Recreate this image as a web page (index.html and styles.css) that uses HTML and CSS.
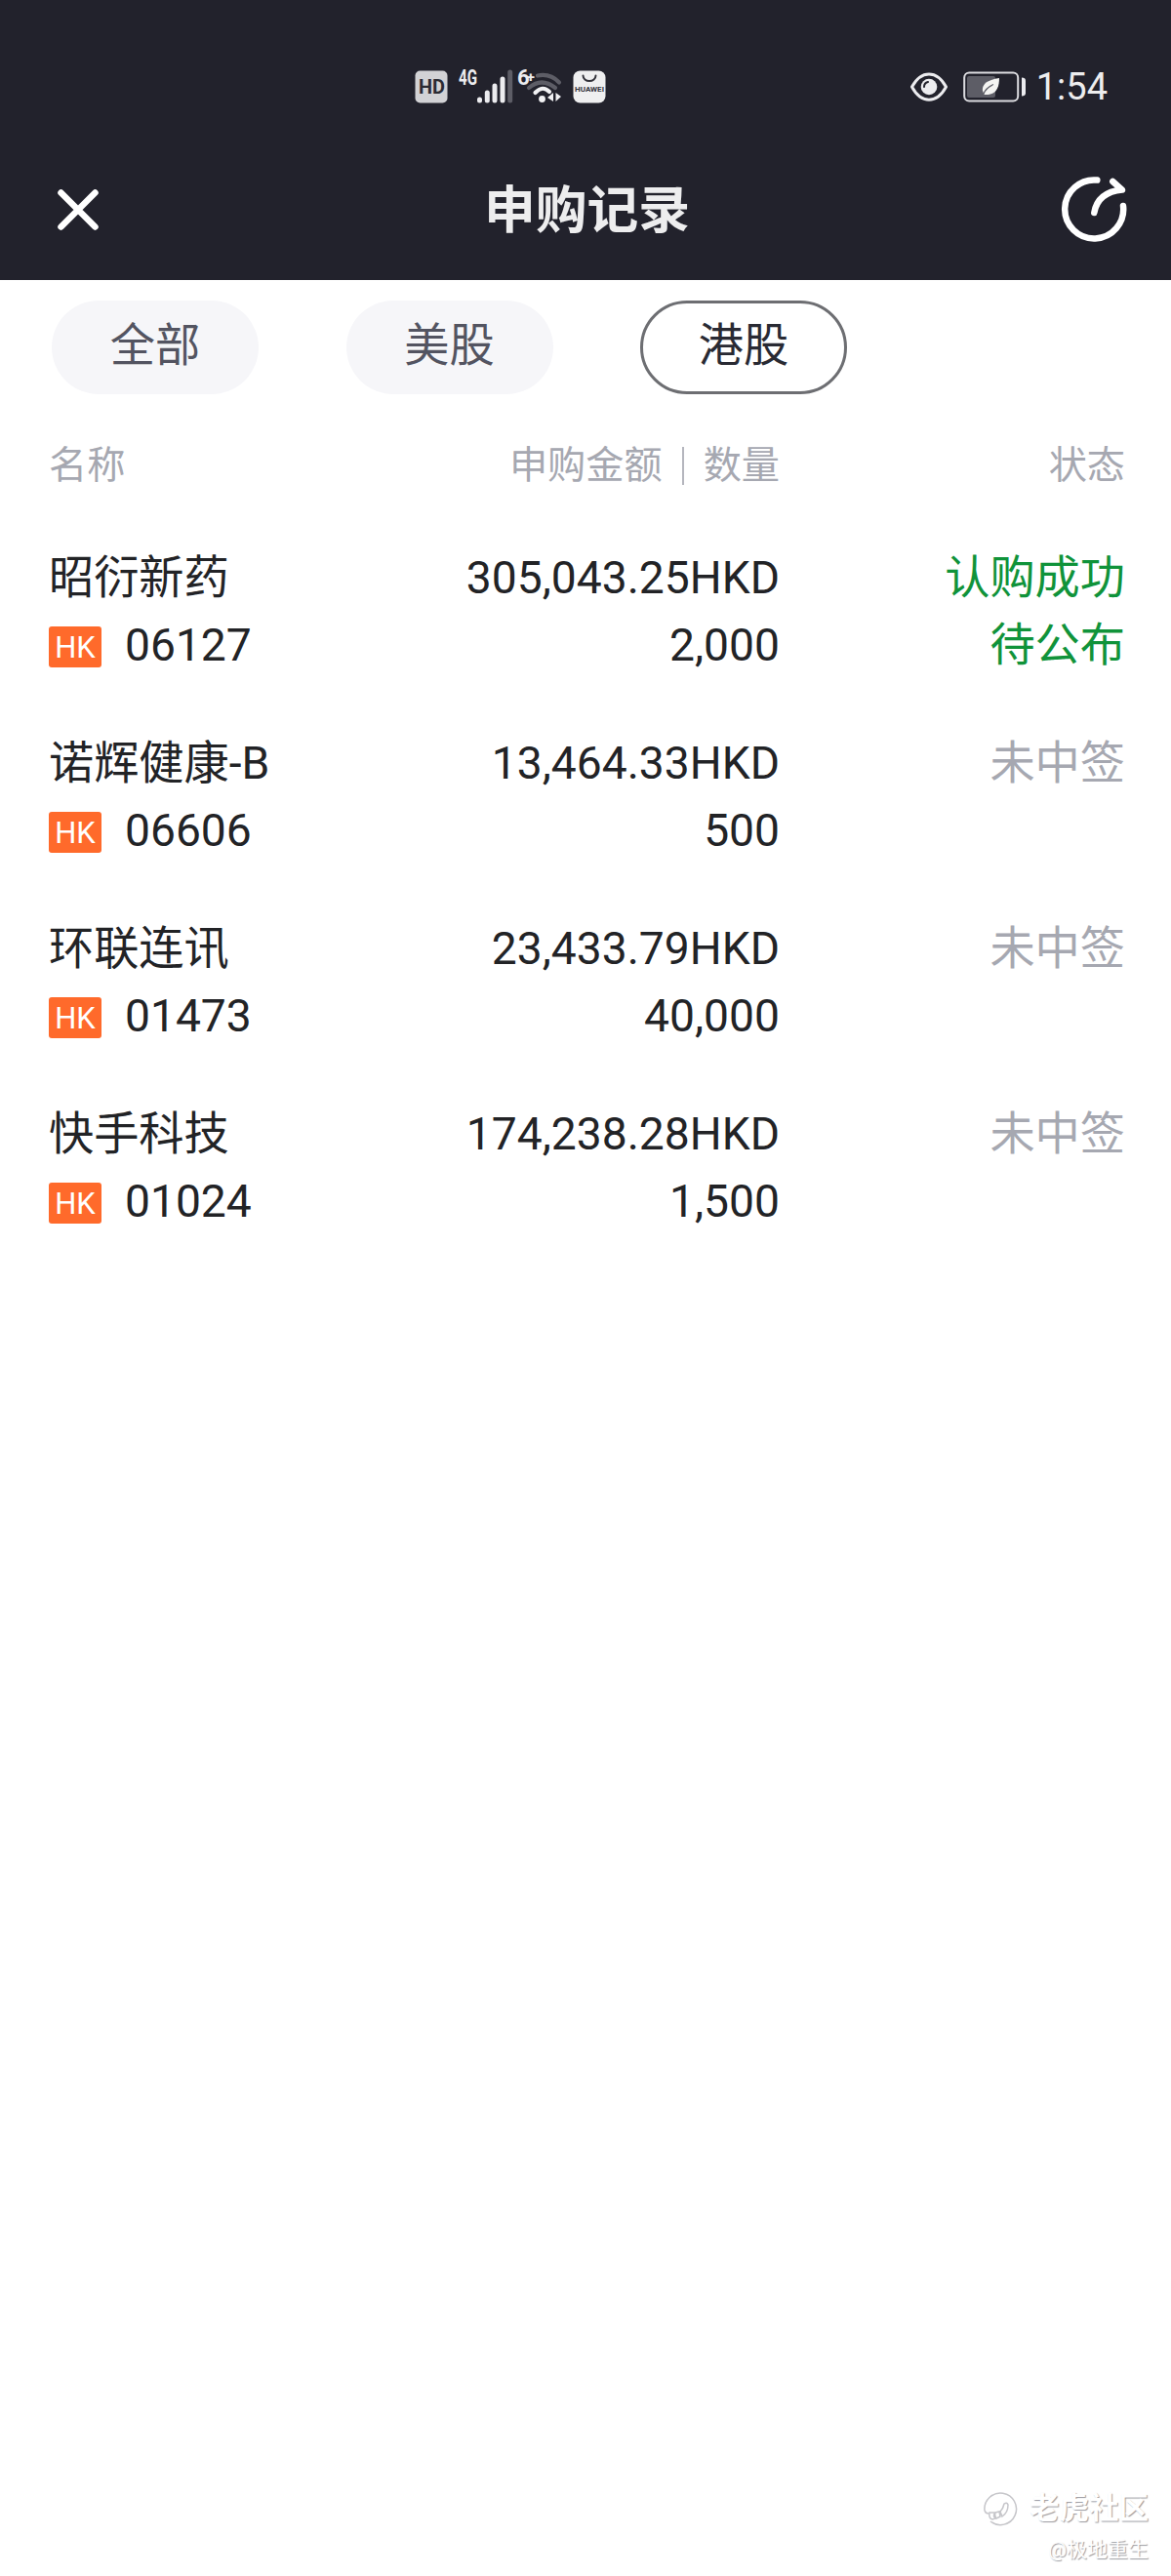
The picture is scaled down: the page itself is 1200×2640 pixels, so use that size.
FILE: index.html
```html
<!DOCTYPE html>
<html lang="zh-CN">
  <head>
    <meta charset="UTF-8" />
    <meta name="viewport" content="width=device-width, initial-scale=1.0" />
    <title>申购记录</title>
    <link rel="stylesheet" href="styles.css">
  </head>
  <body>
    <header class="header">
      <div class="status-bar">
        <div class="status-left">
          <svg width="34" height="34" viewBox="0 0 34 34">
            <rect x="0.5" y="0.5" width="33" height="33" rx="5" fill="#d2d2d5" />
            <text class="hd-text" x="4" y="24" textLength="27" lengthAdjust="spacingAndGlyphs">HD</text>
          </svg>
          <svg class="signal" width="58" height="54" viewBox="0 -8 58 54">
            <text class="net-text" x="1" y="18" textLength="19" lengthAdjust="spacingAndGlyphs">4G</text>
            <g stroke="#ececef" stroke-width="5" stroke-linecap="round">
              <path d="M22.5 33v1M30.3 26v8M38 19v15M46 12v22" />
              <path d="M53.7 5v29" stroke="#5d5d66" />
            </g>
          </svg>
          <svg class="wifi" width="48" height="54" viewBox="0 -8 48 54">
            <text class="net-text" x="1" y="18">6<tspan class="plus" dx="-3" dy="-3">+</tspan></text>
            <g fill="none" stroke-width="4.2" stroke-linecap="round">
              <path d="M22 8.5Q35 6 44 15.5M13 21Q26 10 40 21" stroke="#5d5d66" />
              <path d="M19.5 26Q27 18 34 25" stroke="#f2f2f4" />
            </g>
            <circle cx="26.5" cy="32.5" r="3.4" fill="#f2f2f4" />
            <path d="M38 26v9l-6-4zM40.5 26v9l5.5-5z" fill="#f2f2f4" />
          </svg>
          <svg class="huawei" width="34" height="34" viewBox="0 0 34 34">
            <rect x="0.5" y="0.5" width="33" height="33" rx="7" fill="#efeff0" />
            <path d="M10.5 5.5a6.5 5.5 0 0 0 13 0" fill="none" stroke="#33333b" stroke-width="2" stroke-linecap="round" />
            <text class="huawei-text" x="2" y="22" textLength="30" lengthAdjust="spacingAndGlyphs">HUAWEI</text>
          </svg>
        </div>
        <div class="status-right">
          <svg width="38" height="30" viewBox="0 0 38 30">
            <path d="M1.5 15C11-2.5 27-2.5 36.5 15 27 32.5 11 32.5 1.5 15z" fill="none" stroke="#ececef" stroke-width="3" stroke-linejoin="round" />
            <circle cx="19" cy="15" r="8.3" fill="#ececef" />
            <path d="M14 15q0-4 4-5" fill="none" stroke="#22222c" stroke-width="2" stroke-linecap="round" />
          </svg>
          <svg class="battery" width="65" height="32" viewBox="0 0 65 32">
            <rect x="1.2" y="1.5" width="55" height="29" rx="5" fill="none" stroke="#dcdce0" stroke-width="2" />
            <rect x="4" y="5" width="29" height="22" rx="2" fill="#5d5d66" />
            <path d="M60 6.5q4 0 4 3v13q0 3-4 3z" fill="#ececef" />
            <path d="M37 7C24 9 19 14 20 20l1.5 4C33 25 37 18 37 7z" fill="#f4f4f2" />
            <path d="M20.5 24Q23 17 31 13.5" fill="none" stroke="#5d5d66" stroke-width="1.3" />
          </svg>
          <span class="time">1:54</span>
        </div>
      </div>
      <div class="title-bar">
        <svg width="44" height="44" viewBox="0 0 44 44">
          <path d="M4.5 4.5l35 35M39.5 4.5l-35 35" stroke="#fff" stroke-width="6.5" stroke-linecap="round" />
        </svg>
        <h1>申购记录</h1>
        <svg width="72" height="70" viewBox="0 0 72 70">
          <g fill="none" stroke="#fff" stroke-width="6.5" stroke-linecap="round" stroke-linejoin="round">
            <path d="M39.3 4.6A30 30 0 1 0 66 31" />
            <path d="M36.3 38Q40 17 65 14.6L55.3 6" />
          </g>
        </svg>
      </div>
    </header>

    <nav class="tabs">
      <button class="tab">全部</button>
      <button class="tab">美股</button>
      <button class="tab active">港股</button>
    </nav>

    <main class="records">
      <div class="row head">
        <span>名称</span>
        <span class="amount-head">申购金额<i class="divider"></i>数量</span>
        <span class="status">状态</span>
      </div>
      <div class="row">
        <div>
          <p>昭衍新药</p>
          <p class="code"><span class="badge">HK</span>06127</p>
        </div>
        <div class="amount">
          <p>305,043.25HKD</p>
          <p>2,000</p>
        </div>
        <div class="status success">
          <p>认购成功</p>
          <p>待公布</p>
        </div>
      </div>
      <div class="row">
        <div>
          <p>诺辉健康-B</p>
          <p class="code"><span class="badge">HK</span>06606</p>
        </div>
        <div class="amount">
          <p>13,464.33HKD</p>
          <p>500</p>
        </div>
        <div class="status">
          <p>未中签</p>
        </div>
      </div>
      <div class="row">
        <div>
          <p>环联连讯</p>
          <p class="code"><span class="badge">HK</span>01473</p>
        </div>
        <div class="amount">
          <p>23,433.79HKD</p>
          <p>40,000</p>
        </div>
        <div class="status">
          <p>未中签</p>
        </div>
      </div>
      <div class="row">
        <div>
          <p>快手科技</p>
          <p class="code"><span class="badge">HK</span>01024</p>
        </div>
        <div class="amount">
          <p>174,238.28HKD</p>
          <p>1,500</p>
        </div>
        <div class="status">
          <p>未中签</p>
        </div>
      </div>
    </main>

    <footer class="watermark">
      <div class="brand">
        <svg width="36" height="36" viewBox="0 0 36 36">
          <g fill="none" stroke="#c6c6ca" stroke-width="1.5">
            <path d="M2 20A16.3 16.3 0 1 1 8 31" />
            <path d="M2 20q1 3 4 3m1-1q-1 6 3 7l3-1q-3-3 0-6zm6 0q-1 3 1 6l4-2-1-5zm5-1l2 5q6-4 6-12-1-3-4-1-1 5-4 8z" />
          </g>
        </svg>
        <span>老虎社区</span>
      </div>
      <p class="author">@极地重生</p>
    </footer>
  </body>
</html>
```
FILE: styles.css
```css
* {
  box-sizing: border-box;
  margin: 0;
  padding: 0;
}

body {
  display: flex;
  flex-direction: column;
  height: 2640px;
  background: #fff;
  color: #222326;
  font-family: Roboto, "Noto Sans CJK SC", sans-serif;
  font-size: 46.2px;
  line-height: 69px;
}

svg {
  display: block;
  flex-shrink: 0;
}

/* header */
.header {
  height: 287px;
  background: #22222c;
  color: #ededee;
}

.status-bar {
  display: flex;
  justify-content: space-between;
  align-items: center;
  height: 146px;
  padding: 32px 65px 0 425px;
}

.status-left,
.status-right {
  display: flex;
  align-items: center;
}

.signal {
  margin: -2px 0 0 10px;
}

.wifi {
  margin: -2px 0 0 2px;
}

.huawei {
  margin-left: 10px;
}

.hd-text {
  font-size: 20px;
  font-weight: 700;
  fill: #2b2b33;
}

.net-text {
  font-size: 22px;
  font-weight: 700;
  fill: #ececef;
}

.plus {
  font-size: 15px;
}

.huawei-text {
  font-size: 8px;
  font-weight: 700;
  fill: #33333b;
}

.battery {
  margin-left: 16px;
}

.time {
  margin-left: 10px;
  font-size: 38px;
}

.title-bar {
  display: flex;
  justify-content: space-between;
  align-items: center;
  height: 137px;
  padding: 0 43px 0 58px;
}

h1 {
  padding: 4px 0 0 16px;
  font-size: 52.8px;
  font-weight: 700;
}

/* market tabs */
.tabs {
  display: flex;
  gap: 89.5px;
  padding: 21px 53px 0;
}

.tab {
  width: 212px;
  height: 96px;
  padding-bottom: 4px;
  border: none;
  border-radius: 48px;
  background: #f6f6f9;
  color: #535461;
  font: inherit;
}

.tab.active {
  border: 3px solid #6d6e72;
  background: #fff;
  color: #292a33;
}

/* records */
.records {
  padding: 39px 47px 0 50px;
}

.row {
  display: grid;
  grid-template-columns: 300px 449px 1fr;
  margin-bottom: 52px;
}

.head {
  margin-bottom: 46px;
  color: #a6a8b1;
  font-size: 39.2px;
}

.amount {
  text-align: right;
}

.amount-head {
  display: flex;
  justify-content: flex-end;
  align-items: center;
}

.divider {
  width: 2px;
  height: 39px;
  margin: 0 20px;
  background: #b5b6be;
}

.status {
  color: #a6a8b1;
  text-align: right;
}

.success {
  color: #10933a;
}

.code {
  display: flex;
  align-items: center;
}

.badge {
  width: 54px;
  height: 42px;
  margin: 2px 24px 0 0;
  border-radius: 3px;
  background: #ff6a2b;
  color: #fff;
  font-size: 31px;
  line-height: 43px;
  text-align: center;
}

/* watermark */
.watermark {
  display: flex;
  flex-direction: column;
  align-items: flex-end;
  margin-top: auto;
  padding: 0 23px 12px 0;
  color: #fff;
  text-shadow: 1px 1px 1px #999aa0;
}

.brand {
  display: flex;
  align-items: center;
  gap: 12px;
  margin-bottom: 7px;
  font-size: 30.5px;
  font-weight: 700;
  line-height: 40px;
}

.author {
  font-size: 21px;
  line-height: 30px;
}
```
